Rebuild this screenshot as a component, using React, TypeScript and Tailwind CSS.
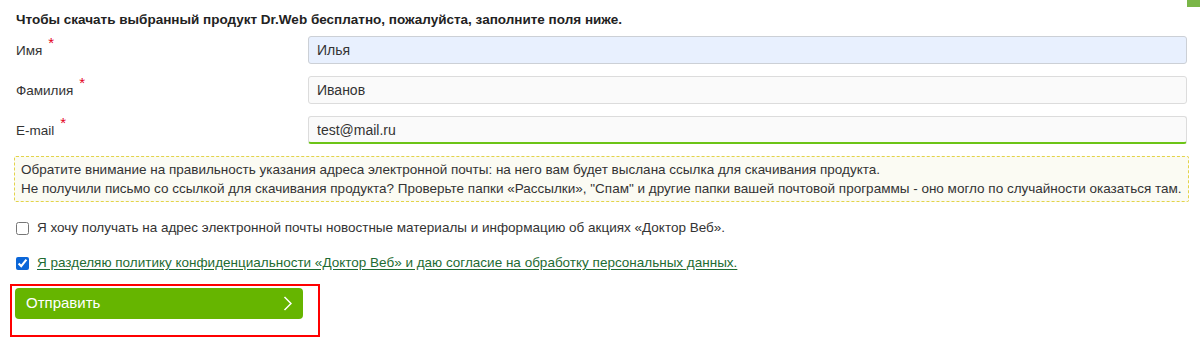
import React from 'react';

interface FieldProps {
  label: string;
  value: string;
  className: string;
}

function Field({ label, value, className }: FieldProps) {
  return (
    <div className="flex items-center h-[28px] mb-[12px]">
      <label className="w-[294px] pl-[2px] text-[13.5px] text-[#333]">
        {label}
        <span className="text-[#e3001b] text-[15px] relative top-[-7px] ml-[6px]">*</span>
      </label>
      <input
        readOnly
        value={value}
        className={`flex-1 h-[28px] mr-[2px] rounded-[3px] border px-[8px] text-[14px] text-[#333] outline-none ${className}`}
      />
    </div>
  );
}

export default function App() {
  return (
    <div className="relative w-[1200px] h-[353px] bg-white font-['Liberation_Sans',Arial,sans-serif] pl-[14px] pr-[11px] pt-[10px]">
      {/* corner decoration */}
      <div className="absolute right-0 top-0 w-[13px] h-[7px] bg-[#7ab648]" />

      <div className="pl-[2px] text-[13.5px] font-bold text-[#222] leading-[20px] mb-[6px]">
        Чтобы скачать выбранный продукт Dr.Web бесплатно, пожалуйста, заполните поля ниже.
      </div>

      <Field label="Имя" value="Илья" className="bg-[#e8f0fe] border-[#ccd0d6]" />
      <Field label="Фамилия" value="Иванов" className="bg-[#fafafa] border-[#dcdcdc]" />
      <Field label="E-mail" value="test@mail.ru" className="bg-[#fafafa] border-[#dcdcdc] border-b-[2px] border-b-[#6cc417]" />

      <div className="border border-dashed border-[#e3d44a] bg-[#fbfbf3] rounded-[2px] px-[6px] py-[3px] text-[13.5px] leading-[19px] text-[#333]">
        <div>Обратите внимание на правильность указания адреса электронной почты: на него вам будет выслана ссылка для скачивания продукта.</div>
        <div>Не получили письмо со ссылкой для скачивания продукта? Проверьте папки «Рассылки», "Спам" и другие папки вашей почтовой программы - оно могло по случайности оказаться там.</div>
      </div>

      <label className="flex items-center gap-[8px] pl-[2px] mt-[18px] h-[16px] text-[13.5px] text-[#333]">
        <input type="checkbox" className="w-[13px] h-[13px] m-0 accent-[#0b66d8]" />
        <span>Я хочу получать на адрес электронной почты новостные материалы и информацию об акциях «Доктор Веб».</span>
      </label>

      <label className="flex items-center gap-[8px] pl-[2px] mt-[19px] h-[16px] text-[13.5px]">
        <input type="checkbox" defaultChecked className="w-[13px] h-[13px] m-0 accent-[#0b66d8]" />
        <a href="#" className="text-[#1e6b32] underline underline-offset-[2px]">
          Я разделяю политику конфиденциальности «Доктор Веб» и даю согласие на обработку персональных данных.
        </a>
      </label>

      <div className="mt-[13px] ml-[-4px] w-[310px] h-[53px] border-2 border-[#ff0000] pt-[2px] pl-[3px]">
        <button className="flex items-center justify-between w-[288px] h-[31px] rounded-[4px] bg-[#66b500] pl-[11px] pr-[11px] text-[15px] text-white">
          <span>Отправить</span>
          <svg width="9" height="15" viewBox="0 0 9 15" fill="none" stroke="white" strokeWidth="1.5">
            <path d="M1.5 1l6.5 6.5-6.5 6.5" />
          </svg>
        </button>
      </div>
    </div>
  );
}
